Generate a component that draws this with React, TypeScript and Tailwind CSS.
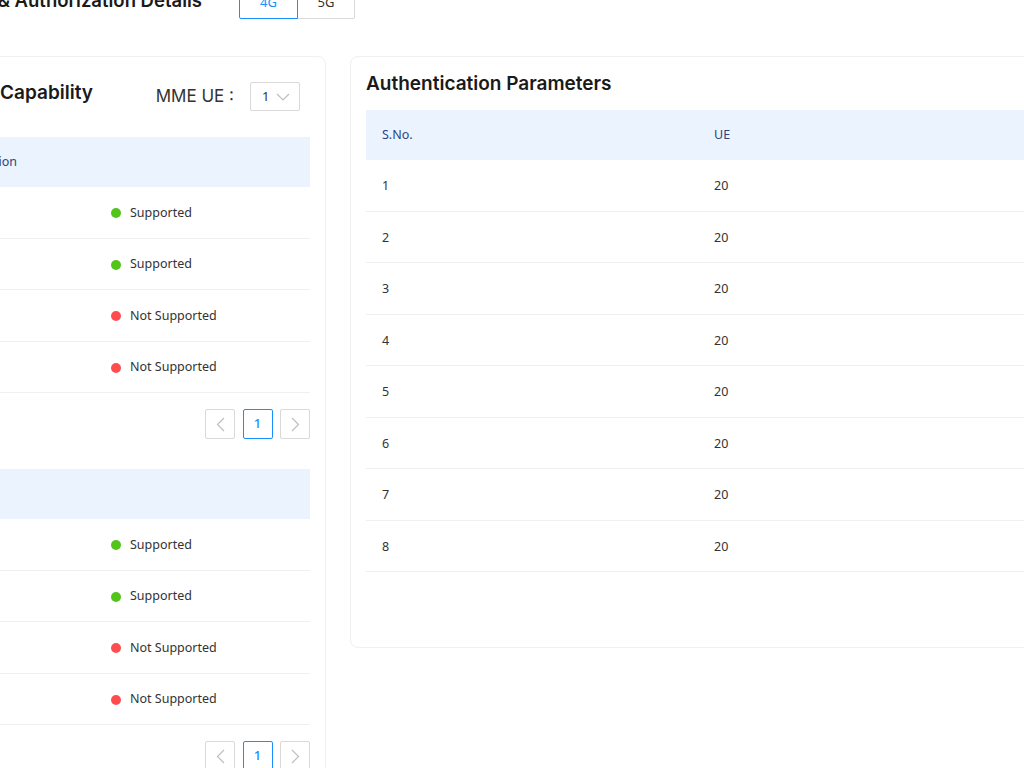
import React from "react";

const headFont = { fontFamily: '"Inter", "Noto Sans", sans-serif' };

function ChevronLeft() {
  return (
    <svg width="9" height="15" viewBox="0 0 9 15" fill="none">
      <polyline points="8,1 1.5,7.5 8,14" stroke="#bfbfbf" strokeWidth="1.2" />
    </svg>
  );
}
function ChevronRight() {
  return (
    <svg width="9" height="15" viewBox="0 0 9 15" fill="none">
      <polyline points="1,1 7.5,7.5 1,14" stroke="#bfbfbf" strokeWidth="1.2" />
    </svg>
  );
}

function Pager() {
  return (
    <div className="flex justify-end mt-[16px] gap-[7.5px]">
      <div className="w-[30px] h-[30px] border border-[#d9d9d9] rounded-[2px] flex items-center justify-center bg-white">
        <ChevronLeft />
      </div>
      <div className="w-[30px] h-[30px] border border-[#1890ff] rounded-[2px] flex items-center justify-center text-[13px] font-medium text-[#1890ff] bg-white">
        1
      </div>
      <div className="w-[30px] h-[30px] border border-[#d9d9d9] rounded-[2px] flex items-center justify-center bg-white">
        <ChevronRight />
      </div>
    </div>
  );
}

type Row = { name: string; ok: boolean };

function CapTable({ title, rows }: { title: string; rows: Row[] }) {
  return (
    <div>
      <div className="flex h-[50px] bg-[#ebf3fe] items-center text-[12.5px] text-[#2b4480]">
        <div className="w-[156px] shrink-0 pl-[16px] whitespace-nowrap">{title}</div>
        <div className="flex-1 pl-[16px]"></div>
      </div>
      {rows.map((r) => (
        <div
          key={r.name}
          className="flex h-[51.5px] items-center border-b border-[#f0f0f0] pt-[2px] text-[12.5px] text-[#333333]"
        >
          <div className="w-[156px] shrink-0 pl-[16px]">{r.name}</div>
          <div className="flex-1 pl-[17px] flex items-center gap-[9px]">
            <span
              className={
                r.ok
                  ? "w-[10px] h-[10px] rounded-full bg-[#52c41a]"
                  : "w-[10px] h-[10px] rounded-full bg-[#ff4d4f]"
              }
            />
            <span>{r.ok ? "Supported" : "Not Supported"}</span>
          </div>
        </div>
      ))}
      <Pager />
    </div>
  );
}

export default function App() {
  const eea: Row[] = [
    { name: "EEA0", ok: true },
    { name: "EEA1", ok: true },
    { name: "EEA2", ok: false },
    { name: "EEA3", ok: false },
  ];
  const eia: Row[] = [
    { name: "EIA0", ok: true },
    { name: "EIA1", ok: true },
    { name: "EIA2", ok: false },
    { name: "EIA3", ok: false },
  ];
  const auth = [1, 2, 3, 4, 5, 6, 7, 8];

  return (
    <div
      className="w-[1024px] h-[768px] overflow-hidden bg-white"
      style={{ fontFamily: '"Noto Sans", "Open Sans", sans-serif' }}
    >
      <div className="ml-[-78px] mt-[-13px] w-[1200px]">
        {/* heading row */}
        <div className="flex items-center h-[32px]">
          <div
            className="w-[280px] flex justify-end whitespace-nowrap text-[18.5px] font-semibold text-[#1a1a1a] mb-[5px]"
            style={headFont}
          >
            Security &amp; Authorization Details
          </div>
          <div className="ml-[37px] flex h-[32px] text-[13px]">
            <div className="w-[59px] border border-[#1890ff] rounded-l-[2px] flex items-end justify-center pb-[6px] text-[#1890ff]">
              4G
            </div>
            <div className="w-[57px] border border-l-0 border-[#d9d9d9] rounded-r-[2px] flex items-end justify-center pb-[6px] text-[#333333]">
              5G
            </div>
          </div>
        </div>

        {/* cards */}
        <div className="flex items-start gap-[24px] mt-[37px]">
          {/* left card */}
          <div className="w-[404px] shrink-0 border border-[#f0f0f0] rounded-[8px] bg-white px-[15px] pt-[15px] pb-[40px]">
            <div className="flex items-center h-[29px] mt-[10px] mr-[10px]">
              <div
                className="flex-1 whitespace-nowrap text-[19px] font-semibold text-[#1a1a1a] -mt-[6px] -ml-[20px]"
                style={headFont}
              >
                Security Capability
              </div>
              <div className="text-[17px] text-[#333333] mr-[16px]" style={headFont}>
                MME UE :
              </div>
              <div className="w-[50px] h-[29px] border border-[#d9d9d9] rounded-[2px] flex items-center pl-[11px] gap-[7px] text-[13px] text-[#333333]">
                <span>1</span>
                <svg width="14" height="8" viewBox="0 0 14 8" fill="none">
                  <polyline points="1,1 7,7 13,1" stroke="#bfbfbf" strokeWidth="1.2" />
                </svg>
              </div>
            </div>
            <div className="mt-[26px]">
              <CapTable title="Encryption" rows={eea} />
            </div>
            <div className="mt-[30px]">
              <CapTable title="EIA" rows={eia} />
            </div>
          </div>

          {/* right card */}
          <div className="w-[720px] shrink-0 border border-[#f0f0f0] rounded-[8px] bg-white px-[15px] pt-[16px] pb-[75px]">
            <div
              className="text-[19px] leading-[22px] font-semibold text-[#1a1a1a]"
              style={headFont}
            >
              Authentication Parameters
            </div>
            <div className="mt-[15px]">
              <div className="flex h-[50px] bg-[#ebf3fe] items-center pt-[1px] text-[12.5px] text-[#2b4480]">
                <div className="w-[332px] shrink-0 pl-[16px]">S.No.</div>
                <div className="flex-1 pl-[16px]">UE</div>
              </div>
              {auth.map((n) => (
                <div
                  key={n}
                  className="flex h-[51.5px] items-center border-b border-[#f0f0f0] pt-[3px] text-[12.5px] text-[#333333]"
                >
                  <div className="w-[332px] shrink-0 pl-[16px]">{n}</div>
                  <div className="flex-1 pl-[16px]">20</div>
                </div>
              ))}
            </div>
          </div>
        </div>
      </div>
    </div>
  );
}
